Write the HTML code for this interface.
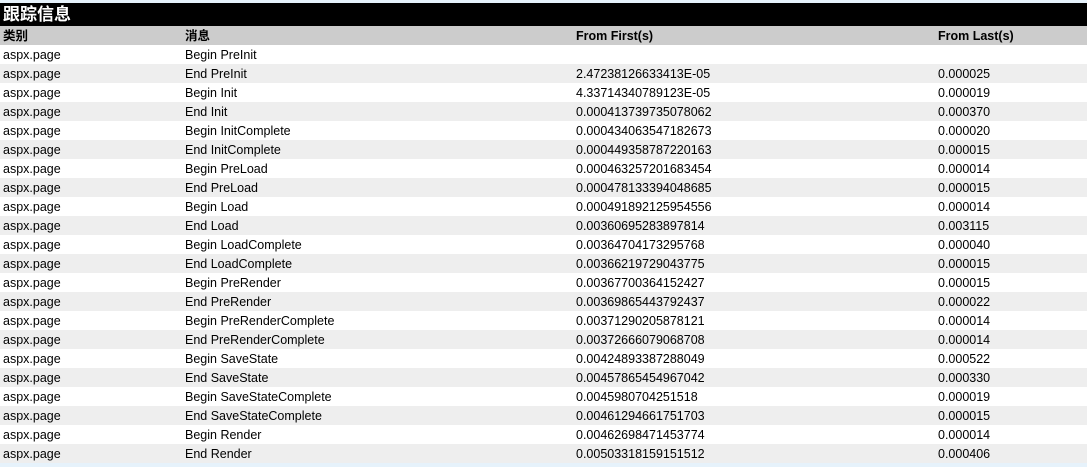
<!DOCTYPE html><html><head><meta charset="utf-8"><style>
body{margin:0;background:#e6f2fb;width:1087px;height:467px;overflow:hidden;font-family:"Liberation Sans","Noto Sans CJK SC",sans-serif;font-size:12.5px;color:#000}
.wrap{position:absolute;top:3px;left:0;width:1087px}
.t{background:#000;color:#fff;font-weight:bold;font-size:17px;height:23px;line-height:23px;padding-left:3px}
.r{position:relative;height:19px;line-height:19px;background:#fff}
.r.a{background:#eee}
.r.h{background:#ccc;font-weight:bold;font-size:12.5px}
.r span{position:absolute;top:1px}
.c1{left:3px}.c2{left:185px}.c3{left:576px}.c4{left:938px}
</style></head><body><div class="wrap">
<div class="t">跟踪信息</div>
<div class="r h"><span class="c1">类别</span><span class="c2">消息</span><span class="c3">From First(s)</span><span class="c4">From Last(s)</span></div>
<div class="r"><span class="c1">aspx.page</span><span class="c2">Begin PreInit</span><span class="c3"></span><span class="c4"></span></div>
<div class="r a"><span class="c1">aspx.page</span><span class="c2">End PreInit</span><span class="c3">2.47238126633413E-05</span><span class="c4">0.000025</span></div>
<div class="r"><span class="c1">aspx.page</span><span class="c2">Begin Init</span><span class="c3">4.33714340789123E-05</span><span class="c4">0.000019</span></div>
<div class="r a"><span class="c1">aspx.page</span><span class="c2">End Init</span><span class="c3">0.000413739735078062</span><span class="c4">0.000370</span></div>
<div class="r"><span class="c1">aspx.page</span><span class="c2">Begin InitComplete</span><span class="c3">0.000434063547182673</span><span class="c4">0.000020</span></div>
<div class="r a"><span class="c1">aspx.page</span><span class="c2">End InitComplete</span><span class="c3">0.000449358787220163</span><span class="c4">0.000015</span></div>
<div class="r"><span class="c1">aspx.page</span><span class="c2">Begin PreLoad</span><span class="c3">0.000463257201683454</span><span class="c4">0.000014</span></div>
<div class="r a"><span class="c1">aspx.page</span><span class="c2">End PreLoad</span><span class="c3">0.000478133394048685</span><span class="c4">0.000015</span></div>
<div class="r"><span class="c1">aspx.page</span><span class="c2">Begin Load</span><span class="c3">0.000491892125954556</span><span class="c4">0.000014</span></div>
<div class="r a"><span class="c1">aspx.page</span><span class="c2">End Load</span><span class="c3">0.00360695283897814</span><span class="c4">0.003115</span></div>
<div class="r"><span class="c1">aspx.page</span><span class="c2">Begin LoadComplete</span><span class="c3">0.00364704173295768</span><span class="c4">0.000040</span></div>
<div class="r a"><span class="c1">aspx.page</span><span class="c2">End LoadComplete</span><span class="c3">0.00366219729043775</span><span class="c4">0.000015</span></div>
<div class="r"><span class="c1">aspx.page</span><span class="c2">Begin PreRender</span><span class="c3">0.00367700364152427</span><span class="c4">0.000015</span></div>
<div class="r a"><span class="c1">aspx.page</span><span class="c2">End PreRender</span><span class="c3">0.00369865443792437</span><span class="c4">0.000022</span></div>
<div class="r"><span class="c1">aspx.page</span><span class="c2">Begin PreRenderComplete</span><span class="c3">0.00371290205878121</span><span class="c4">0.000014</span></div>
<div class="r a"><span class="c1">aspx.page</span><span class="c2">End PreRenderComplete</span><span class="c3">0.00372666079068708</span><span class="c4">0.000014</span></div>
<div class="r"><span class="c1">aspx.page</span><span class="c2">Begin SaveState</span><span class="c3">0.00424893387288049</span><span class="c4">0.000522</span></div>
<div class="r a"><span class="c1">aspx.page</span><span class="c2">End SaveState</span><span class="c3">0.00457865454967042</span><span class="c4">0.000330</span></div>
<div class="r"><span class="c1">aspx.page</span><span class="c2">Begin SaveStateComplete</span><span class="c3">0.0045980704251518</span><span class="c4">0.000019</span></div>
<div class="r a"><span class="c1">aspx.page</span><span class="c2">End SaveStateComplete</span><span class="c3">0.00461294661751703</span><span class="c4">0.000015</span></div>
<div class="r"><span class="c1">aspx.page</span><span class="c2">Begin Render</span><span class="c3">0.00462698471453774</span><span class="c4">0.000014</span></div>
<div class="r a"><span class="c1">aspx.page</span><span class="c2">End Render</span><span class="c3">0.00503318159151512</span><span class="c4">0.000406</span></div>
</div></body></html>
